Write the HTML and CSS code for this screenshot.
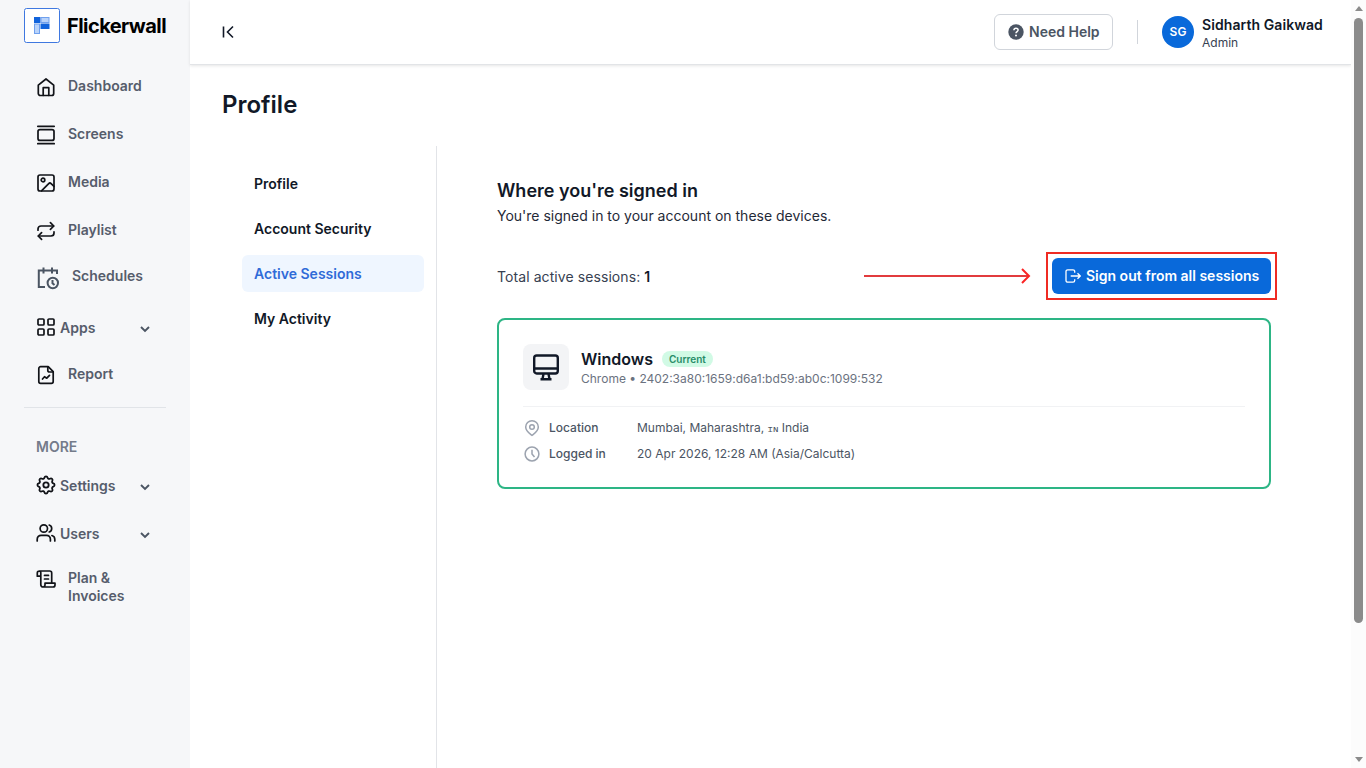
FILE: index.html
```html
<!DOCTYPE html>
<html lang="en">
  <head>
    <meta charset="UTF-8">
    <meta name="viewport" content="width=device-width, initial-scale=1.0">
    <title>Flickerwall | Profile</title>
    <link rel="stylesheet" href="styles.css">
  </head>
  <body>
    <aside class="sidebar">
      <div class="brand">
        <svg class="brand-logo" width="36" height="36" viewBox="0 0 36 36">
          <rect x="0.5" y="0.5" width="35" height="34" rx="2" fill="#fff" stroke="#3f78e0"/>
          <rect x="10" y="9" width="6.500" height="6" fill="#1264dc"/>
          <rect x="17" y="9.500" width="8" height="5" fill="#b9d3fa" stroke="#6fa0ee"/>
          <rect x="10.500" y="16" width="5" height="9.500" fill="#b9d3fa" stroke="#6fa0ee"/>
          <rect x="16.500" y="15.500" width="9" height="5.500" fill="#1264dc"/>
        </svg>
        <span class="brand-name">Flickerwall</span>
      </div>

      <nav class="nav">
        <a class="nav-item">
          <svg class="icon" viewBox="0 0 20 20"><path d="M2.300 8.200 10 2l7.700 6.200v8.300a2 2 0 0 1-2 2H4.300a2 2 0 0 1-2-2z"/><path d="M7.200 18.300v-7.600h5.600v7.600"/></svg>
          <span>Dashboard</span>
        </a>
        <a class="nav-item">
          <svg class="icon" viewBox="0 0 20 20"><path d="M1.800 1.300h16.400M1.800 18.700h16.400"/><rect x="2" y="4.600" width="16" height="10.800" rx="2"/></svg>
          <span>Screens</span>
        </a>
        <a class="nav-item">
          <svg class="icon" viewBox="0 0 20 20"><rect x="2" y="2" width="16" height="16" rx="2"/><circle cx="7" cy="7" r="1.800"/><path d="m5.500 17.800 7.200-7.200a1.700 1.700 0 0 1 2.400 0L18 13.400"/></svg>
          <span>Media</span>
        </a>
        <a class="nav-item">
          <svg class="icon" viewBox="0 0 20 20"><path d="m14.400 1.600 3.400 3.400-3.400 3.400"/><path d="M2 9.200V8a3 3 0 0 1 3-3h12.500"/><path d="m5.600 18.400L2.200 15l3.400-3.400"/><path d="M18 10.800V12a3 3 0 0 1-3 3H2.500"/></svg>
          <span>Playlist</span>
        </a>
        <a class="nav-item nav-schedules">
          <svg class="icon" viewBox="0 0 24 24"><path d="M9 21H2.800V4.500H21V8M7.500 1.500v6M16 1.500v6"/><circle cx="16.800" cy="17" r="5.200"/><path d="M16.500 14v3.200l2 1.800"/></svg>
          <span>Schedules</span>
        </a>
        <a class="nav-item nav-group nav-apps">
          <svg class="icon" viewBox="0 0 20 20"><rect x="2" y="2" width="6" height="6" rx="1"/><rect x="12" y="2" width="6" height="6" rx="1"/><rect x="2" y="12" width="6" height="6" rx="1"/><rect x="12" y="12" width="6" height="6" rx="1"/></svg>
          <span>Apps</span>
          <svg class="chevron" viewBox="0 0 12 12"><path d="m2 4 4 4 4-4"/></svg>
        </a>
        <a class="nav-item">
          <svg class="icon" viewBox="0 0 20 20"><path d="M12.200 1.700H4.600a1.800 1.800 0 0 0-1.800 1.800v13a1.800 1.800 0 0 0 1.800 1.800h10.800a1.800 1.800 0 0 0 1.800-1.800V6.700z"/><path d="M11.800 1.900v3.300a1.800 1.800 0 0 0 1.800 1.800h3.400"/><path d="m6.500 14 2-2.300 2.300 1.500 2.700-2.900"/></svg>
          <span>Report</span>
        </a>
      </nav>

      <div class="nav-divider"></div>
      <p class="nav-title">MORE</p>

      <nav class="nav">
        <a class="nav-item nav-group">
          <svg class="icon icon-gear" viewBox="1.500 1.500 21 21"><path d="M10.325 4.317c.426-1.756 2.924-1.756 3.350 0a1.724 1.724 0 0 0 2.573 1.066c1.543-.94 3.310.826 2.370 2.370a1.724 1.724 0 0 0 1.065 2.572c1.756.426 1.756 2.924 0 3.350a1.724 1.724 0 0 0-1.066 2.573c.94 1.543-.826 3.310-2.370 2.370a1.724 1.724 0 0 0-2.572 1.065c-.426 1.756-2.924 1.756-3.350 0a1.724 1.724 0 0 0-2.573-1.066c-1.543.94-3.310-.826-2.370-2.370a1.724 1.724 0 0 0-1.065-2.572c-1.756-.426-1.756-2.924 0-3.350a1.724 1.724 0 0 0 1.066-2.573c-.94-1.543.826-3.310 2.370-2.370 1 .608 2.296.070 2.572-1.065z"/><circle cx="12" cy="12" r="2.800"/></svg>
          <span>Settings</span>
          <svg class="chevron" viewBox="0 0 12 12"><path d="m2 4 4 4 4-4"/></svg>
        </a>
        <a class="nav-item nav-group">
          <svg class="icon" viewBox="0 0 20 20"><circle cx="7.800" cy="5.500" r="3.700"/><path d="M1.200 18v-1.800a3.900 3.900 0 0 1 3.900-3.900h5.400a3.900 3.900 0 0 1 3.900 3.900V18M13.200 2a3.700 3.700 0 0 1 0 7M18.800 18v-1.800a3.900 3.900 0 0 0-2.900-3.700"/></svg>
          <span>Users</span>
          <svg class="chevron" viewBox="0 0 12 12"><path d="m2 4 4 4 4-4"/></svg>
        </a>
        <a class="nav-item nav-plan">
          <svg class="icon" viewBox="0 0 20 20"><path d="M4.800 7.200H1.300V4a2 2 0 0 1 2-2h10.400a2 2 0 0 1 2 2v9.500M4.800 4v11.800a2.200 2.200 0 0 0 2.200 2.200h10a2 2 0 0 0 2-2v-1.800H9v2a2 2 0 0 1-2 1.800M3.300 2a1.700 1.700 0 0 1 1.500 2M8.500 6.400h4M8.500 10h4"/></svg>
          <span>Plan &amp; Invoices</span>
        </a>
      </nav>
    </aside>

    <div class="page">
      <header class="topbar">
        <svg class="collapse" width="16" height="16" viewBox="0 0 16 16"><path d="M3.500 2.500v11M13 2.500 7.500 8l5.500 5.500"/></svg>
        <button class="help-button">
          <svg width="16" height="16" viewBox="0 0 16 16"><circle cx="8" cy="8" r="7.700" fill="#4b5563"/><path d="M5.900 6.200C6 4.800 6.900 4.200 8 4.200s2.100.7 2.100 1.900C10.100 7.600 8 7.700 8 9.300" fill="none" stroke="#fff" stroke-width="1.500"/><circle cx="8" cy="11.600" r="1" fill="#fff"/></svg>
          <span>Need Help</span>
        </button>
        <div class="topbar-divider"></div>
        <div class="avatar">SG</div>
        <div class="user">
          <span class="user-name">Sidharth Gaikwad</span>
          <span class="user-role">Admin</span>
        </div>
      </header>

      <main class="main">
        <h1>Profile</h1>
        <div class="columns">
          <nav class="tabs">
            <a class="tab">Profile</a>
            <a class="tab">Account Security</a>
            <a class="tab active">Active Sessions</a>
            <a class="tab">My Activity</a>
          </nav>

          <section class="sessions">
            <h2>Where you're signed in</h2>
            <p class="subtitle">You're signed in to your account on these devices.</p>

            <div class="summary">
              <span class="total">Total active sessions: <b>1</b></span>
              <svg class="arrow" width="167" height="18" viewBox="0 0 167 18"><path d="M0 9h165" stroke="#e23b3d"/><path d="m158 2 7 7-7 7" stroke="#fb2424"/></svg>
              <div class="highlight">
                <button class="signout">
                  <svg width="16" height="16" viewBox="0 0 16 16"><path d="M9.700 4.700V3.500A1.700 1.700 0 0 0 8 1.800H2.700A1.700 1.700 0 0 0 1 3.500v9a1.700 1.700 0 0 0 1.700 1.700H8a1.700 1.700 0 0 0 1.700-1.700v-1.200M5.700 8h9.300M12.500 5.200 15.300 8l-2.800 2.800"/></svg>
                  <span>Sign out from all sessions</span>
                </button>
              </div>
            </div>

            <article class="card">
              <div class="device">
                <div class="device-icon">
                  <svg width="28" height="28" viewBox="0 0 28 28"><rect x="2.200" y="2.500" width="23.600" height="18" rx="2.500"/><path d="M2.200 15.500h23.600M11.500 21l-1 5M16.500 21l1 5M8.500 26.200h11"/></svg>
                </div>
                <div class="device-info">
                  <div class="device-title">
                    <h3>Windows</h3>
                    <span class="badge">Current</span>
                  </div>
                  <p class="device-address">Chrome • 2402:3a80:1659:d6a1:bd59:ab0c:1099:532</p>
                </div>
              </div>
              <div class="detail">
                <svg width="18" height="18" viewBox="0 0 18 18"><path d="M9 16.400c-1.500-1.200-6.300-4-6.300-8.400a6.300 6.300 0 0 1 12.600 0c0 4.400-4.800 7.200-6.300 8.400z"/><circle cx="9" cy="8" r="2.300"/></svg>
                <span class="detail-label">Location</span>
                <span>Mumbai, Maharashtra, <span class="country">ɪɴ</span> India</span>
              </div>
              <div class="detail">
                <svg width="18" height="18" viewBox="0 0 18 18"><circle cx="9" cy="9" r="6.900"/><path d="M9 4.800V9l2.500 3"/></svg>
                <span class="detail-label">Logged in</span>
                <span>20 Apr 2026, 12:28 AM (Asia/Calcutta)</span>
              </div>
            </article>
          </section>
        </div>
      </main>
    </div>

    <div class="scrollbar">
      <div class="scroll-up"></div>
      <div class="scroll-thumb"></div>
      <div class="scroll-down"></div>
    </div>
  </body>
</html>
```

FILE: styles.css
```css
* {
  box-sizing: border-box;
}
body {
  font-family: Inter, sans-serif;
  margin: 0;
  height: 768px;
  display: flex;
  overflow: hidden;
  background-color: #fff;
  color: #111827;
  font-size: 14px;
}
h1, h2, h3, p {
  margin: 0;
}
button {
  font-family: inherit;
}
svg {
  flex-shrink: 0;
}

/* Sidebar */
.sidebar {
  width: 190px;
  flex-shrink: 0;
  background-color: #f6f7f9;
}
.brand {
  display: flex;
  align-items: center;
  gap: 7px;
  height: 62px;
  padding: 0 0 10px 24px;
}
.brand-name {
  color: #000;
  font-size: 20px;
  font-weight: 700;
  letter-spacing: -0.55px;
}
.nav {
  display: flex;
  flex-direction: column;
}
.nav-item {
  display: flex;
  align-items: center;
  gap: 12px;
  height: 48px;
  padding: 0 39px 0 36px;
  color: #565d6c;
  font-weight: 600;
  line-height: 18px;
}
.icon {
  width: 20px;
  height: 20px;
  margin-top: 2px;
  fill: none;
  stroke: #111318;
  stroke-width: 1.7;
  stroke-linecap: round;
  stroke-linejoin: round;
}
.nav-schedules {
  height: 46px;
  padding-bottom: 2px;
}
.nav-schedules .icon {
  width: 24px;
  height: 24px;
  margin-top: 3px;
  stroke: #4b5563;
  stroke-width: 2;
  stroke-linecap: butt;
  stroke-linejoin: miter;
}
.nav-group {
  gap: 4px;
}
.nav-group .icon {
  margin-top: -2px;
}
.nav-group .icon-gear {
  stroke-width: 1.9;
}
.nav-apps {
  height: 44px;
  margin-top: 6px;
}
.chevron {
  width: 12px;
  height: 12px;
  margin: 2px 0 0 auto;
  fill: none;
  stroke: #4b5563;
  stroke-width: 1.9;
}
.nav-divider {
  height: 1px;
  margin: 9px 24px 29px;
  background-color: #e1e4e8;
}
.nav-title {
  height: 25px;
  padding-left: 36px;
  color: #747b8a;
  font-weight: 600;
  line-height: 20px;
}
.nav-plan {
  height: 58px;
  align-items: flex-start;
  padding-top: 11px;
}
.nav-plan .icon {
  margin-top: 0;
}

/* Top bar */
.page {
  flex: 1;
  display: flex;
  flex-direction: column;
}
.topbar {
  display: flex;
  align-items: center;
  height: 65px;
  padding: 0 28px 0 30px;
  border-bottom: 1px solid #e2e4e7;
  box-shadow: 0 1px 3px rgba(0, 0, 0, 0.1);
}
.collapse {
  fill: none;
  stroke: #111827;
  stroke-width: 1.6;
}
.help-button {
  display: flex;
  align-items: center;
  gap: 5px;
  width: 119px;
  height: 36px;
  margin-left: auto;
  padding: 0 13px;
  border: 1px solid #d1d5db;
  border-radius: 6px;
  background-color: #fff;
  color: #4b5563;
  font-size: 14px;
  font-weight: 600;
  white-space: nowrap;
}
.help-button span, .signout span {
  padding-bottom: 1px;
}
.topbar-divider {
  width: 1px;
  height: 24px;
  margin: 0 24px;
  background-color: #d1d5db;
}
.avatar {
  width: 32px;
  height: 32px;
  border-radius: 50%;
  background-color: #0969da;
  color: #fff;
  font-size: 12px;
  font-weight: 600;
  line-height: 32px;
  text-align: center;
}
.user {
  display: flex;
  flex-direction: column;
  width: 121px;
  margin-left: 8px;
  padding-top: 3px;
  white-space: nowrap;
}
.user-name {
  font-weight: 600;
  letter-spacing: 0.08px;
  line-height: 18px;
}
.user-role {
  color: #374151;
  font-size: 12px;
  line-height: 18px;
}

/* Profile */
.main {
  flex: 1;
  display: flex;
  flex-direction: column;
  padding: 24px 80px 0 32px;
}
h1 {
  height: 57px;
  font-size: 24px;
  font-weight: 600;
  line-height: 32px;
}
.columns {
  flex: 1;
  display: flex;
}
.tabs {
  display: flex;
  flex-direction: column;
  gap: 8px;
  width: 215px;
  padding: 19px 12px 0 20px;
  border-right: 1px solid #e2e4e8;
}
.tab {
  height: 37px;
  padding: 0 12px;
  border-radius: 6px;
  font-weight: 600;
  line-height: 37px;
}
.tab.active {
  background-color: #eff6ff;
  color: #2f6bd8;
}
.sessions {
  flex: 1;
  padding: 32px 0 0 60px;
}
h2 {
  font-size: 18px;
  font-weight: 600;
  line-height: 26px;
}
.subtitle {
  color: #1f2937;
  line-height: 24px;
}
.summary {
  display: flex;
  align-items: center;
  height: 48px;
  margin: 24px -6px 18px 0;
}
.total {
  color: #374151;
  letter-spacing: 0.08px;
}
.total b {
  color: #111827;
  font-weight: 600;
}
.arrow {
  margin-left: auto;
  fill: none;
  stroke-width: 2;
}
.highlight {
  width: 231px;
  height: 48px;
  margin-left: 15px;
  padding: 4px;
  border: 2px solid #ef2b23;
}
.signout {
  display: flex;
  align-items: center;
  gap: 5px;
  width: 219px;
  height: 36px;
  padding: 0 13px;
  border: none;
  border-radius: 6px;
  background-color: #0969da;
  color: #fff;
  font-size: 14px;
  font-weight: 600;
  white-space: nowrap;
}
.signout svg {
  fill: none;
  stroke: #fff;
  stroke-width: 1.3;
}
.card {
  height: 171px;
  padding: 24px;
  border: 2px solid #2db585;
  border-radius: 8px;
}
.device {
  display: flex;
  gap: 12px;
  height: 63px;
  margin-bottom: 8px;
  border-bottom: 1px solid #f1f2f4;
}
.device-icon {
  display: flex;
  align-items: center;
  justify-content: center;
  width: 46px;
  height: 46px;
  border-radius: 8px;
  background-color: #f3f4f6;
}
.device-icon svg {
  fill: none;
  stroke: #111827;
  stroke-width: 2.4;
}
.device-info {
  padding-top: 3px;
}
.device-title {
  display: flex;
  align-items: center;
  gap: 9px;
}
h3 {
  font-size: 16px;
  font-weight: 600;
  line-height: 24px;
}
.badge {
  height: 16px;
  padding: 0 7px;
  border-radius: 8px;
  background-color: #d1fae5;
  color: #288c68;
  font-size: 10px;
  font-weight: 600;
  line-height: 16px;
}
.device-address {
  color: #6b7280;
  font-size: 12px;
  line-height: 15px;
}
.detail {
  display: flex;
  align-items: center;
  height: 26px;
  color: #4b5563;
  font-size: 12px;
  line-height: 16px;
}
.detail svg {
  fill: none;
  stroke: #9ca3af;
  stroke-width: 1.5;
}
.detail-label {
  width: 88px;
  margin-left: 8px;
  font-weight: 500;
}
.country {
  font-family: "DejaVu Sans Mono", monospace;
  font-size: 9px;
}

/* Scrollbar */
.scrollbar {
  display: flex;
  flex-direction: column;
  align-items: center;
  width: 15px;
  padding: 6px 0;
  background-color: #fcfcfc;
}
.scroll-up, .scroll-down {
  border: 4px solid transparent;
}
.scroll-up {
  border-top: none;
  border-bottom: 5px solid #8b8b8b;
}
.scroll-thumb {
  width: 9px;
  height: 605px;
  margin-top: 7px;
  border-radius: 5px;
  background-color: #8b8b8b;
}
.scroll-down {
  margin-top: auto;
  border-bottom: none;
  border-top: 5px solid #8b8b8b;
}
```
